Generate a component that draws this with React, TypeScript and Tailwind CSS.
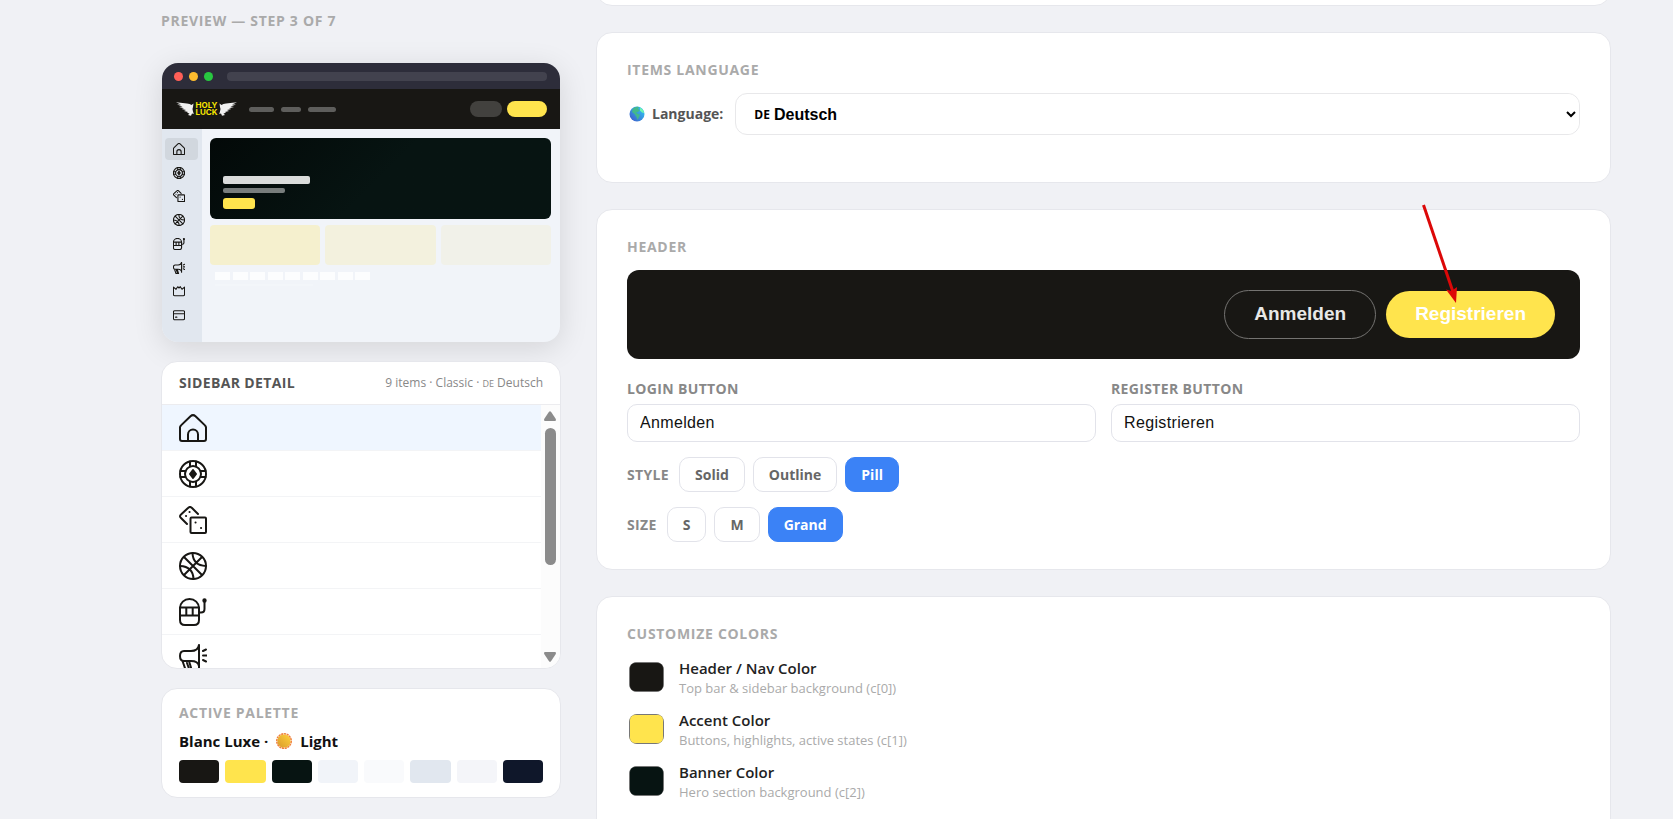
import { useState } from "react";
import type { ReactNode } from "react";

const icons: Record<string, ReactNode> = {
  home: (
    <>
      <path d="M1 13.5Q1 12.300 2 11.400L11.500 2.200Q14 0 16.500 2.200L26 11.400Q27 12.300 27 13.500V25Q27 27 25 27H3Q1 27 1 25Z" />
      <path d="M9 27V20.500a5 5 0 0 1 10 0V27" />
    </>
  ),
  chip: (
    <>
      <circle cx="14" cy="14" r="13" />
      <circle cx="14" cy="14" r="8" />
      <path d="M11 1.500V6.500M17 1.500V6.500M11 21.500V26.500M17 21.500V26.500M1.500 11H6.500M1.500 17H6.500M21.500 11H26.500M21.500 17H26.500" />
      <path d="M14 10L17 14L14 18L11 14Z" fill="currentColor" />
    </>
  ),
  dice: (
    <>
      <rect x="11.500" y="11.500" width="15.500" height="15.500" rx="1" />
      <path d="M19 8L13 2Q11 0 9 2L2 8.500Q0 10.200 2 12L8 18" />
      <path d="M10.500 6h.1M7 10h.1M16.500 16.500h.1M22 22h.1" />
    </>
  ),
  ball: (
    <>
      <circle cx="14" cy="14" r="13" />
      <path d="M5 5L23 23M23 5L5 23M13.500 1Q14 13.500 27 14M1 14Q14 14.500 14.500 27" />
    </>
  ),
  slots: (
    <>
      <path d="M1 10a9.500 9 0 0 1 19 0V22Q20 27 15 27H6Q1 27 1 22Z" />
      <path d="M1 9.500H20M1 17.500H20M7.300 9.500V17.500M13.700 9.500V17.500M20 14.500H22Q25.500 14.500 25.500 11V3" />
      <circle cx="25.500" cy="2.500" r="1.200" fill="currentColor" />
    </>
  ),
  promo: (
    <>
      <path d="M20 1V24M20 1Q19 7 12 7H5Q1 7 1 12Q1 17 5 17H12Q19 17 20 22M3.500 17L7 27H13L10 17M8 19L10.500 26" />
      <path d="M24 7L27 5.500M24 11.500H27.500M24 16L27 17.500" />
    </>
  ),
  crown: <path d="M1 5L7 10L11 4L14 7L17 4L21 10L27 5V22Q27 25 24 25H4Q1 25 1 22Z" />,
  card: (
    <>
      <rect x="1" y="4" width="26" height="21" rx="3" />
      <path d="M1 11H27M6 19H9" />
    </>
  ),
};

function Icon({ name, className, stroke = 2 }: { name: string; className: string; stroke?: number }) {
  return (
    <svg viewBox="0 0 28 28" className={className} fill="none" stroke="currentColor" strokeWidth={stroke} strokeLinecap="round" strokeLinejoin="round" aria-hidden="true">
      {icons[name]}
    </svg>
  );
}

function Wing({ className = "" }: { className?: string }) {
  return (
    <svg viewBox="0 0 18 14" className={`h-[14px] w-[18px] ${className}`} fill="#f1f1f1" aria-hidden="true">
      <path d="M0 .3L11 1.400Q14 1.800 15.500 3L17.500 1.500L17 5Q15.800 7.500 17 9.500L17.800 12L16 11.500L15 13.700L12 13L13.500 11.500L11 10.800L12 9.900L8 9L10 8L5.500 7L8 6.200L3 5L6.500 4.400L1 2.600L5 2.500Z" />
    </svg>
  );
}

const navItems = ["home", "chip", "dice", "ball", "slots", "promo", "crown", "card"];

const palette = [
  "bg-[#181714]",
  "bg-[#ffe44d]",
  "bg-[#071412]",
  "bg-[#f1f4f9]",
  "bg-[#f9fafc]",
  "bg-[#e1e7ef]",
  "bg-[#f4f5f9]",
  "bg-[#0f172a]",
];

const customColors = [
  { id: "c0", title: "Header / Nav Color", hint: "Top bar & sidebar background (c[0])", value: "#181714" },
  { id: "c1", title: "Accent Color", hint: "Buttons, highlights, active states (c[1])", value: "#ffe44d" },
  { id: "c2", title: "Banner Color", hint: "Hero section background (c[2])", value: "#071412" },
];

function Card({ className = "", children }: { className?: string; children?: ReactNode }) {
  return <section className={`rounded-2xl border border-[#e6e7ec] bg-white ${className}`}>{children}</section>;
}

function Heading({ children }: { children: ReactNode }) {
  return <h2 className="text-sm leading-5 font-bold tracking-wider text-[#aaaaaa] uppercase">{children}</h2>;
}

function BrowserPreview() {
  return (
    <div className="overflow-hidden rounded-2xl bg-[#f1f4f9] shadow-[0_6px_30px_rgba(0,0,0,0.12)]">
      <div className="flex h-[26px] items-center gap-1.5 bg-[#2d2d3a] pr-[13px] pl-3">
        <span className="size-[9px] rounded-full bg-[#ff5f57]" />
        <span className="size-[9px] rounded-full bg-[#febc2e]" />
        <span className="size-[9px] rounded-full bg-[#28c840]" />
        <span className="ml-2 h-[9px] flex-1 rounded bg-[#42424e]" />
      </div>
      <div className="flex h-10 items-center bg-[#181714] pr-[13px] pl-3.5">
        <div className="flex items-center text-center">
          <Wing />
          <span className="w-[25px] font-['Inter'] text-[8px] leading-[7px] font-bold text-[#f7e600]">HOLY LUCK</span>
          <Wing className="-scale-x-100" />
        </div>
        <div className="ml-3 flex flex-1 gap-[7px]">
          <span className="h-[5px] w-[25px] rounded-sm bg-[#5e5e5c]" />
          <span className="h-[5px] w-5 rounded-sm bg-[#5e5e5c]" />
          <span className="h-[5px] w-7 rounded-sm bg-[#5e5e5c]" />
        </div>
        <span className="mr-[5px] h-4 w-8 rounded-full bg-[#42413e]" />
        <span className="h-4 w-10 rounded-full bg-[#ffe44d]" />
      </div>
      <div className="flex h-[213px]">
        <div className="flex w-10 flex-col justify-between bg-[#e1e7ef] pt-[9px] pr-1 pb-4 pl-[3px] text-[#181714]">
          {navItems.map((name, i) => (
            <span key={name} className={`flex h-[22px] items-center rounded px-2 ${i === 0 ? "bg-[#d1d7de]" : ""}`}>
              <Icon name={name} className="size-3" stroke={2.6} />
            </span>
          ))}
        </div>
        <div className="flex-1 pt-[9px] pr-[9px] pl-2">
          <div className="flex h-[81px] flex-col justify-end rounded-md bg-linear-135 from-[#030908] to-[#071412] to-50% px-[13px] pb-2.5">
            <span className="h-2 w-[87px] rounded-xs bg-[#dadcdb]" />
            <span className="mt-1 h-[5px] w-[62px] rounded-xs bg-[#787d7c]" />
            <span className="mt-[5px] h-[11px] w-8 rounded-[3px] bg-[#ffe44d]" />
          </div>
          <div className="mt-1.5 grid grid-cols-3 gap-[5px]">
            <span className="h-10 rounded bg-[#f5f0ce]" />
            <span className="h-10 rounded bg-[#f3f1de]" />
            <span className="h-10 rounded bg-[#f1f1e9]" />
          </div>
          <div className="mt-[7px] ml-[5px] flex w-[155px] justify-between">
            {Array.from({ length: 9 }, (_, i) => (
              <span key={i} className="h-2 w-[15px] bg-[#fcfdfe]" />
            ))}
          </div>
          <span className="mt-1 ml-[5px] block h-0.5 w-[98px] bg-[#f3f6fa]" />
        </div>
      </div>
    </div>
  );
}

function SidebarDetail() {
  return (
    <Card className="mt-[19px] overflow-hidden">
      <div className="flex h-[43px] items-center justify-between border-b border-[#ececef] px-[17px]">
        <h2 className="text-sm font-bold tracking-wide text-[#555555]">SIDEBAR DETAIL</h2>
        <p className="text-xs text-[#888888]">
          9 items · Classic · <span className="text-[9px]">DE</span> Deutsch
        </p>
      </div>
      <div className="flex h-[263px]">
        <ul className="flex-1 overflow-hidden text-[#181714]">
          {navItems.map((name, i) => (
            <li key={name} className={`flex h-[46px] items-center border-b border-[#f3f4f6] px-[17px] ${i === 0 ? "bg-[#eff6ff]" : ""}`}>
              <Icon name={name} className="size-7" />
            </li>
          ))}
        </ul>
        <div className="flex w-[19px] flex-col items-center justify-between bg-[#fcfcfc] py-1.5 pr-px text-[#8b8b8b]">
          <svg viewBox="0 0 12 10" className="h-2.5 w-3" fill="currentColor" aria-hidden="true">
            <path d="M5 .8Q6 -.4 7 .8L11.800 8Q12.300 10 11 10H1Q-.3 10 .2 8Z" />
          </svg>
          <div className="mt-[7px] mb-auto h-[137px] w-[11px] rounded-full bg-[#8b8b8b]" />
          <svg viewBox="0 0 12 10" className="h-2.5 w-3 rotate-180" fill="currentColor" aria-hidden="true">
            <path d="M5 .8Q6 -.4 7 .8L11.800 8Q12.300 10 11 10H1Q-.3 10 .2 8Z" />
          </svg>
        </div>
      </div>
    </Card>
  );
}

function ActivePalette() {
  return (
    <Card className="mt-[19px] px-[17px] pt-3.5 pb-3.5">
      <Heading>Active palette</Heading>
      <p className="mt-1.5 flex items-center text-[15px] leading-6 font-bold text-[#111111]">
        Blanc Luxe ·
        <svg viewBox="0 0 16 16" className="mx-2 size-4" aria-hidden="true">
          <defs>
            <linearGradient id="sun" x1="1" y1="0" x2="0" y2="1">
              <stop offset="0" stopColor="#ffd23c" />
              <stop offset="1" stopColor="#d99a2b" />
            </linearGradient>
          </defs>
          <circle cx="8" cy="8" r="7.200" fill="none" stroke="#f0803c" strokeWidth="1.600" strokeDasharray="2.200 .6" />
          <circle cx="8" cy="8" r="6.600" fill="url(#sun)" />
        </svg>
        Light
      </p>
      <div className="mt-[7px] grid grid-cols-8 gap-1.5">
        {palette.map((color) => (
          <span key={color} className={`h-[23px] rounded ${color}`} />
        ))}
      </div>
    </Card>
  );
}

function LanguageCard() {
  return (
    <Card className="mt-[26px] px-[30px] pt-[27px] pb-[47px]">
      <Heading>Items language</Heading>
      <div className="mt-[13px] flex items-center">
        <svg viewBox="0 0 16 16" className="mr-[7px] ml-0.5 size-4" aria-hidden="true">
          <defs>
            <linearGradient id="sea" x1="1" y1="0" x2="0" y2="1">
              <stop offset="0" stopColor="#30d0f5" />
              <stop offset="1" stopColor="#3f55c8" />
            </linearGradient>
          </defs>
          <circle cx="8" cy="8" r="7.500" fill="url(#sea)" />
          <path d="M4 2.500Q7 0 10 1L9 3L11 4L9 6L7 6.500L9 8L11 8.500L10 11L8.500 14L7.500 11L5.500 8L3 6Z" fill="#43b98b" />
          <path d="M11 1.500Q14.500 3.500 15.300 7L13 6.500L11 4.500Z" fill="#6ff5b0" />
        </svg>
        <label htmlFor="language" className="text-sm font-bold text-[#555555]">
          Language:
        </label>
        <div className="ml-3 flex h-[42px] flex-1 items-center rounded-xl border border-[#e8e8ea] pl-[18px] font-['Liberation_Sans'] font-bold text-black">
          <span className="pt-0.5 font-['Open_Sans'] text-xs">DE</span>
          <select id="language" defaultValue="de" className="h-full flex-1 rounded-xl bg-white text-base outline-none">
            <option value="de">Deutsch</option>
            <option value="en">English</option>
            <option value="fr">Français</option>
          </select>
        </div>
      </div>
    </Card>
  );
}

function Choice({ label, options, value, onChange }: { label: string; options: string[]; value: string; onChange: (v: string) => void }) {
  return (
    <div className="mt-[15px] flex items-center gap-2">
      <span className="mr-0.5 text-sm font-bold tracking-wide text-[#888888]">{label}</span>
      {options.map((o) => (
        <button
          key={o}
          type="button"
          aria-pressed={o === value}
          onClick={() => onChange(o)}
          className={`h-[35px] rounded-[10px] border px-[15px] text-sm font-bold ${
            o === value ? "border-[#3b82f6] bg-[#3b82f6] text-white" : "border-[#e2e3ea] bg-white text-[#666666]"
          }`}
        >
          {o}
        </button>
      ))}
    </div>
  );
}

function HeaderCard() {
  const [login, setLogin] = useState("Anmelden");
  const [register, setRegister] = useState("Registrieren");
  const [style, setStyle] = useState("Pill");
  const [size, setSize] = useState("Grand");
  const label = "text-sm leading-5 font-bold tracking-wide text-[#888888]";
  const input =
    "mt-[5px] block h-[38px] w-full rounded-[10px] border border-[#e2e3ea] bg-white px-3 font-['Liberation_Sans'] text-base font-normal text-[#111111] outline-none";

  return (
    <div className="relative">
      <Card className="mt-[26px] px-[30px] pt-[27px] pb-[27px]">
        <Heading>Header</Heading>
        <div className="mt-[13px] flex h-[89px] items-center justify-end gap-2.5 rounded-xl bg-[#181714] px-[25px] font-['Liberation_Sans'] text-[19px] font-bold">
          <button type="button" className="h-[49px] rounded-full border border-[#747371] px-[29px] text-[#e8e8e7]">
            {login}
          </button>
          <button type="button" className="h-[47px] rounded-full bg-[#ffe44d] px-[29px] text-white">
            {register}
          </button>
        </div>
        <div className="mt-5 grid grid-cols-2 gap-[15px]">
          <label className={label}>
            LOGIN BUTTON
            <input value={login} onChange={(e) => setLogin(e.target.value)} className={input} />
          </label>
          <label className={label}>
            REGISTER BUTTON
            <input value={register} onChange={(e) => setRegister(e.target.value)} className={input} />
          </label>
        </div>
        <Choice label="STYLE" options={["Solid", "Outline", "Pill"]} value={style} onChange={setStyle} />
        <Choice label="SIZE" options={["S", "M", "Grand"]} value={size} onChange={setSize} />
      </Card>
      <svg viewBox="0 0 40 100" className="pointer-events-none absolute -top-[5px] right-[151px] h-[100px] w-10" aria-hidden="true">
        <path d="M3.500 1L33 88" stroke="#dc0808" strokeWidth="3" />
        <path d="M36 99L26 85.500L31.500 87L37 83Z" fill="#dc0808" />
      </svg>
    </div>
  );
}

function ColorsCard() {
  return (
    <Card className="mt-[26px] px-[30px] pt-[27px] pb-10">
      <Heading>Customize colors</Heading>
      <div className="mt-3 flex flex-col gap-2.5">
        {customColors.map((c) => (
          <div key={c.id} className="flex items-center gap-[15px]">
            <input
              id={c.id}
              type="color"
              defaultValue={c.value}
              className="ml-0.5 h-[30px] w-[35px] rounded-lg [&::-webkit-color-swatch]:rounded-md [&::-webkit-color-swatch]:border-[#777777] [&::-webkit-color-swatch-wrapper]:p-0"
            />
            <label htmlFor={c.id} className="pt-0.5 text-[15px] leading-5 font-semibold text-[#222222]">
              {c.title}
              <span className="block text-[13px] font-normal text-[#aaaaaa]">{c.hint}</span>
            </label>
          </div>
        ))}
      </div>
    </Card>
  );
}

export default function App() {
  return (
    <main className="flex h-screen items-start gap-[35px] overflow-hidden bg-[#f0f1f5] pr-[62px] pl-[161px] font-['Open_Sans',sans-serif]">
      <div className="w-[400px] shrink-0 pt-[11px]">
        <Heading>Preview — step 3 of 7</Heading>
        <div className="mt-8 px-px">
          <BrowserPreview />
        </div>
        <SidebarDetail />
        <ActivePalette />
      </div>
      <div className="min-w-0 flex-1">
        <Card className="-mt-8 h-[38px]" />
        <LanguageCard />
        <HeaderCard />
        <ColorsCard />
      </div>
    </main>
  );
}
